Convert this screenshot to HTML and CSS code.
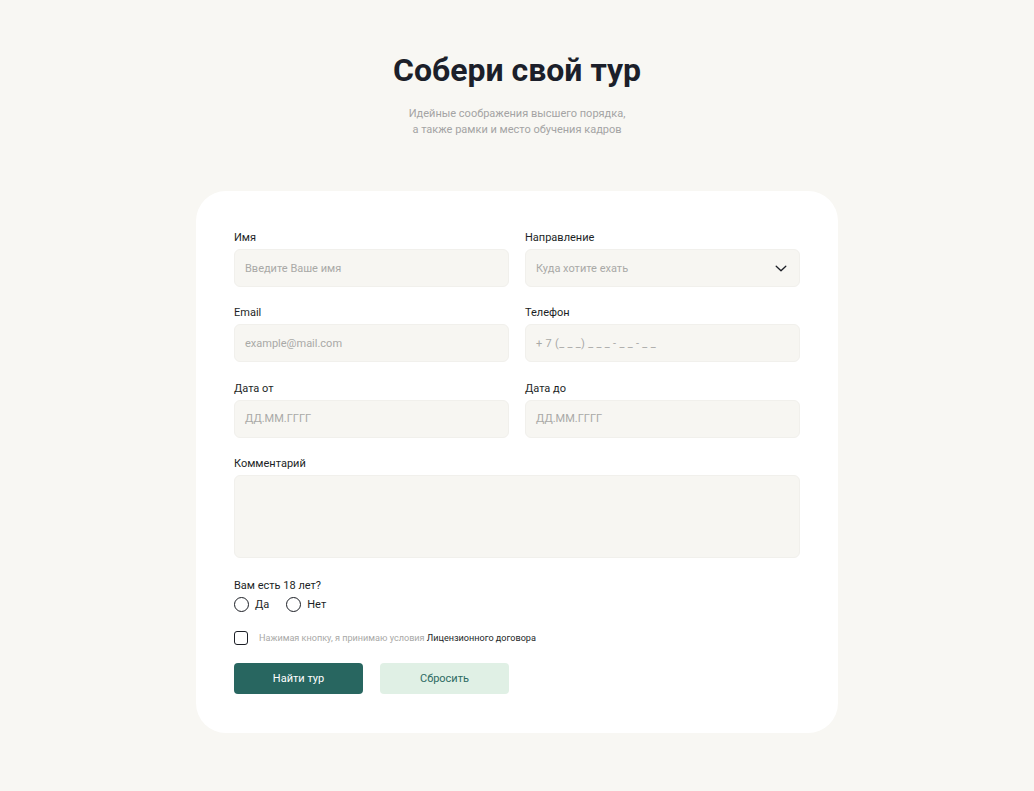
FILE: index.html
```html
<!DOCTYPE html>
<html lang="ru">
<head>
<meta charset="utf-8">
<link rel="stylesheet" href="styles.css">
</head>
<body>
<main class="page">
  <h1 class="title">Собери свой тур</h1>
  <p class="subtitle">Идейные соображения высшего порядка,<br>а также рамки и место обучения кадров</p>
  <form class="card">
    <div class="grid">
      <div class="field">
        <label class="label">Имя</label>
        <div class="input"><span class="ph">Введите Ваше имя</span></div>
      </div>
      <div class="field">
        <label class="label">Направление</label>
        <div class="input select"><span class="ph">Куда хотите ехать</span>
          <svg class="chev" width="12" height="7" viewBox="0 0 12 7"><path d="M1.2 1.2l4.8 4.6 4.8-4.6" fill="none" stroke="#1c1f26" stroke-width="1.3" stroke-linecap="round" stroke-linejoin="round"/></svg>
        </div>
      </div>
      <div class="field">
        <label class="label">Email</label>
        <div class="input"><span class="ph">example@mail.com</span></div>
      </div>
      <div class="field">
        <label class="label">Телефон</label>
        <div class="input"><span class="ph phone">+ 7 (_ _ _) _ _ _ - _ _ - _ _</span></div>
      </div>
      <div class="field">
        <label class="label">Дата от</label>
        <div class="input"><span class="ph">ДД.ММ.ГГГГ</span></div>
      </div>
      <div class="field">
        <label class="label">Дата до</label>
        <div class="input"><span class="ph">ДД.ММ.ГГГГ</span></div>
      </div>
      <div class="field wide">
        <label class="label">Комментарий</label>
        <div class="input textarea"></div>
      </div>
    </div>
    <div class="age">
      <div class="label">Вам есть 18 лет?</div>
      <div class="radios">
        <span class="radio"><span class="circle"></span>Да</span>
        <span class="radio"><span class="circle"></span>Нет</span>
      </div>
    </div>
    <div class="agree">
      <span class="box"></span>
      <span class="agree-text">Нажимая кнопку, я принимаю условия <span class="link">Лицензионного договора</span></span>
    </div>
    <div class="buttons">
      <button type="button" class="btn primary">Найти тур</button>
      <button type="button" class="btn secondary">Сбросить</button>
    </div>
  </form>
</main>
</body>
</html>
```

FILE: styles.css
```css
* { box-sizing: border-box; }
html, body { margin: 0; padding: 0; }
body {
  background: #f8f7f3;
  font-family: Roboto, "Noto Sans", sans-serif;
  color: #1c1f26;
  width: 1034px;
  height: 791px;
  overflow: hidden;
}
.page {
  display: flex;
  flex-direction: column;
  align-items: center;
  padding-top: 50px;
}
.title {
  margin: 0;
  font-size: 32px;
  line-height: 40px;
  font-weight: 700;
  color: #1c1f2a;
}
.subtitle {
  margin: 16px 0 0;
  font-size: 11px;
  line-height: 16px;
  color: #a4a4a4;
  text-align: center;
}
.card {
  margin-top: 53px;
  width: 642px;
  background: #fff;
  border-radius: 30px;
  padding: 40px 38px 39px;
}
.grid {
  display: grid;
  grid-template-columns: 275px 275px;
  column-gap: 16px;
  row-gap: 19.4px;
}
.wide { grid-column: 1 / -1; }
.field { display: flex; flex-direction: column; }
.label {
  font-size: 11px;
  line-height: 13px;
  color: #1c1f26;
  margin-bottom: 5px;
}
.input {
  height: 38px;
  background: #f7f6f2;
  border: 1px solid #f1f0ec;
  border-radius: 6px;
  padding: 0 10px;
  display: flex;
  align-items: center;
}
.textarea { height: 83px; }
.select { justify-content: space-between; padding-right: 12px; }
.ph { font-size: 11px; color: #a9a9a7; }
.phone { letter-spacing: 0.3px; }
.age { margin-top: 20.6px; }
.age .label { margin-bottom: 5px; }
.radios { display: flex; gap: 17px; }
.radio {
  display: flex;
  align-items: center;
  gap: 6px;
  font-size: 11px;
  line-height: 16px;
}
.circle {
  width: 15px;
  height: 15px;
  border: 1.3px solid #1c1f26;
  border-radius: 50%;
}
.agree {
  margin-top: 18px;
  display: flex;
  align-items: center;
  gap: 11px;
}
.box {
  width: 14px;
  height: 14px;
  border: 1.3px solid #1c1f26;
  border-radius: 3px;
}
.agree-text { font-size: 9.1px; color: #a9a9a7; }
.link { color: #1c1f26; }
.buttons {
  margin-top: 18.5px;
  display: flex;
  gap: 17px;
}
.btn {
  width: 129px;
  height: 31px;
  border: none;
  border-radius: 4px;
  font-family: Roboto, "Noto Sans", sans-serif;
  font-size: 11px;
  cursor: pointer;
}
.primary { background: #286660; color: #fff; }
.secondary { background: #e0f0e5; color: #2c6b63; }
```
